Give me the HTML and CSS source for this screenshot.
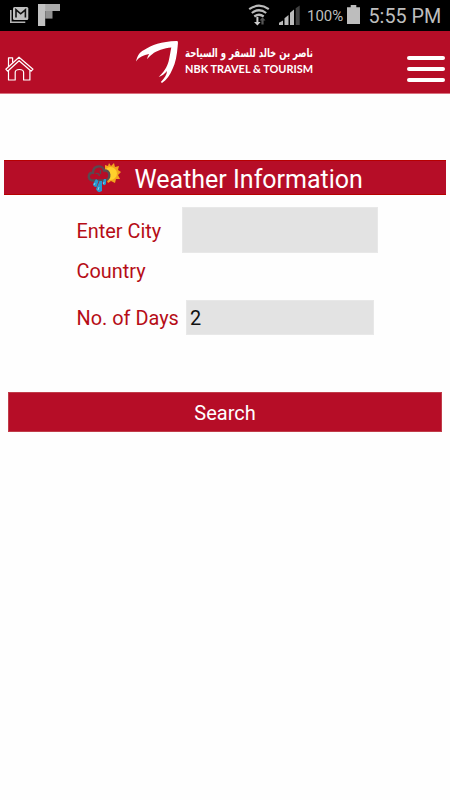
FILE: index.html
```html
<!DOCTYPE html>
<html lang="en">
<head>
<meta charset="utf-8">
<title>Weather Information</title>
<link rel="stylesheet" href="styles.css">
</head>
<body>
<div class="status">
  <svg class="status-left" width="70" height="31" viewBox="0 0 70 31" aria-hidden="true">
    <path d="M10.800 10v12.200h14.500" fill="none" stroke="#b5b5b5" stroke-width="1.600"/>
    <rect x="13" y="7" width="15.300" height="13" rx="1.500" fill="#c0c0c0"/>
    <path d="M16 17.500V9.800l4.700 4 4.700-4v7.700" fill="none" stroke="#111" stroke-width="1.600"/>
    <path d="M38 4h22v7H38z" fill="#aaa"/>
    <path d="M38 4h7.200v22H38z" fill="#c1c1c1"/>
    <path d="M45.200 11h7.300v7.600h-7.300z" fill="#929292"/>
  </svg>
  <svg class="signals" width="56" height="31" viewBox="0 0 56 31" aria-hidden="true">
    <g fill="none" stroke="#bbb" stroke-width="2.200">
      <path d="M4.200 9.200q9.800-7 19.600 0"/>
      <path d="M6.800 13q7.200-5.500 14.400 0"/>
      <path d="M9.300 16.500q4.700-3.500 9.400 0"/>
    </g>
    <path d="M11.400 17h2v5h2.200L12.400 25.600 9 22h2.400z" fill="#ccc"/>
    <path d="M16.400 24.500v-4H14.500l3-3.300 3 3.300h-1.900v4z" fill="#555"/>
    <path d="M34 25v-2.200l4-2.200V25zM39.500 25v-6.800l4-3.200v10zM45 25V12.700l4-3.200V25z" fill="#bbb"/>
    <path d="M50.700 25V8.300l4-2.800V25z" fill="#414141"/>
  </svg>
  <span class="percent">100%</span>
  <svg class="battery" width="13" height="31" viewBox="0 0 13 31" aria-hidden="true">
    <path d="M3.700 5h5.600v2.200H13V24H0V7.200h3.700z" fill="#bdbdbd"/>
  </svg>
  <span class="clock">5:55 PM</span>
</div>
<header class="header">
  <svg class="home" width="30" height="26" viewBox="0 0 30 26" aria-label="Home">
    <g fill="none" stroke="#fff" stroke-width="1.200" stroke-linejoin="round">
      <path d="M.8 13.200 14 1.200 28 13.200 26.200 15.200 14.100 4.700 2.600 15.200z"/>
      <path d="M3.500 10.700V1.800h4.100v5"/>
      <path d="M3.500 14.700v9.300h6.700v-7.500q0-3 4.200-3t4.200 3V24h6.300v-9.500"/>
    </g>
  </svg>
  <svg class="logo" width="190" height="46" viewBox="0 0 190 46">
    <path d="M0 22.500C1.500 16 4 13 8 11 16 6 25 2.500 40.500 2c2 0 1.500 2 1.200 5-.7 9-2.200 17-5.200 23-2.500 6-5.500 10.500-10.500 14L24.800 43c4-4 6-7.500 6.200-11-2.500 3-5 5-8.300 6 4.500-4.500 8.500-9.500 10-16C34 16.500 34.500 12 35.300 8.500 28.500 8.800 20 12 16.500 15c-2.300 1.500-3.800 3.300-5.300 5.200.2-2 .8-3.500 2-5.200C7.500 16 3 18 0 22.500z" fill="#fff"/>
    <text class="logo-ar" x="177" y="17.500" direction="rtl" textLength="128" lengthAdjust="spacingAndGlyphs">ناصر بن خالد للسفر و السياحة</text>
    <text class="logo-en" x="49" y="34" textLength="128" lengthAdjust="spacingAndGlyphs">NBK TRAVEL &amp; TOURISM</text>
  </svg>
  <div class="menu"><i></i><i></i><i></i></div>
</header>
<main>
  <h1 class="title">
    <svg width="34" height="32" viewBox="0 0 34 32" aria-hidden="true">
      <path d="m22 1 2 3 3-3 1 4 4-1-1 4 3 2-3 3 2 4-4 0-1 4-4-2-3 2-2-4-5-1 2-4-2-3 4-2V3l3 1z" fill="#f2a51e"/>
      <circle cx="23.500" cy="11.500" r="6.500" fill="#ffd02c"/>
      <path d="M5.500 18.500C0 17.500 1 10.500 6 10.800 6 3 16 2.500 17 8.500c6.500-1 7 8.500 1.500 10z" fill="#b60d27" stroke="#5a4a50" stroke-width="2.400"/>
      <path d="M8.500 11.500q3-1 4 2.500m1-6v4" fill="none" stroke="#5a4a50" stroke-width="1.300"/>
      <path d="m9 17-3 5q0 3 3.500 3l2-6zm8 0-1.500 4q1 4 3.500 1v-5zm-4.500 2-3.500 8q1.500 5 6 2v-10z" fill="#2499d0"/>
      <path d="m8 21-1 2m5 2-1 3m6-8-.5 2" stroke="#8fcbe5"/>
    </svg>
    <span>Weather Information</span>
  </h1>
  <form class="form">
    <label class="row city"><span>Enter City</span><input type="text"></label>
    <div class="row country"><span>Country</span></div>
    <label class="row days"><span>No. of Days</span><input type="text" value="2"></label>
    <button class="search" type="button">Search</button>
  </form>
</main>
</body>
</html>
```
FILE: styles.css
```css
* { box-sizing: border-box; }
body {
  margin: 0;
  min-height: 800px;
  background: #fefefe;
  font-family: Roboto, "Liberation Sans", sans-serif;
}
svg { display: block; flex: none; overflow: visible; }
.status {
  display: flex;
  align-items: center;
  height: 31px;
  background: #000;
  color: #bebebe;
  white-space: nowrap;
}
.signals { margin-left: 175px; }
.percent { width: 46px; padding-left: 6px; font-size: 15px; }
.clock { margin-left: 8.500px; padding-top: 1px; font-size: 19.800px; }
.header {
  display: flex;
  height: 63px;
  background: #b60d27;
  border-bottom: 1px solid #d9707e;
}
.home { margin: 25px 0 0 5px; }
.logo { margin: 8px 0 0 101px; }
.logo-ar {
  fill: #fff;
  font: bold 12px "DejaVu Sans", sans-serif;
}
.logo-en {
  fill: #fff;
  font: bold 11.500px Lato, sans-serif;
}
.menu {
  display: flex;
  flex-direction: column;
  gap: 7px;
  width: 38px;
  margin: 25px 0 0 81px;
}
.menu i { height: 4px; border-radius: 2px; background: #fff; }
.title {
  display: flex;
  align-items: center;
  gap: 13.500px;
  height: 35px;
  margin: 66px 4px 0;
  padding-left: 83px;
  background: #b60d27;
  border: solid #b60000;
  border-width: 1px 0;
  color: #fff;
  font-size: 25px;
  font-weight: 400;
  white-space: nowrap;
}
.title span { padding-top: 4px; }
.form { padding: 12px 8px 0; }
.row {
  display: flex;
  align-items: center;
  padding-left: 68.500px;
  color: #b60d17;
  font-size: 19.900px;
  white-space: nowrap;
}
.row span { flex: none; padding-top: 2px; }
.row input {
  border: 1px solid #e8e8e8;
  border-radius: 0;
  background: #e3e3e3;
  color: #111;
  font: inherit;
  padding: 2px 3px 0;
}
.city span { width: 105.500px; }
.city input { width: 196px; height: 46px; }
.country { height: 36px; }
.country span { padding-top: 0; }
.days { height: 35px; margin-top: 11px; }
.days span { width: 109.500px; }
.days input { width: 188px; height: 35px; }
.search {
  display: block;
  width: 100%;
  height: 40px;
  margin-top: 57px;
  padding: 2px 0 0;
  border: 1px solid #c03c49;
  background: #b60d27;
  color: #fff;
  font: 20px Roboto, sans-serif;
}
```
